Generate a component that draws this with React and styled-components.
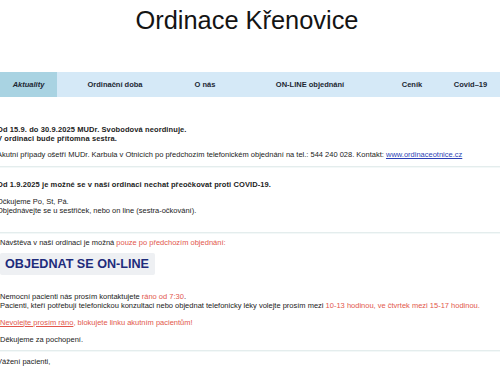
import React from 'react';
import styled, { createGlobalStyle } from 'styled-components';

const GlobalStyle = createGlobalStyle`
  html, body {
    margin: 0;
    padding: 0;
    background: #ffffff;
    font-family: "Liberation Sans", Arial, sans-serif;
    overflow: hidden;
  }
`;

const Page = styled.div`
  width: 500px;
  height: 375px;
  overflow: hidden;
`;

const Header = styled.header`
  height: 72px;
  display: flex;
  justify-content: center;
  padding: 5px 6px 0 0;
  box-sizing: border-box;
`;

const Title = styled.h1`
  margin: 0;
  font-size: 25.4px;
  line-height: 30px;
  font-weight: normal;
  color: #141414;
`;

const Nav = styled.nav`
  display: flex;
  height: 25px;
  background: #d5e9f7;
`;

const NavItem = styled.div`
  width: ${({ w }) => w}px;
  display: flex;
  align-items: center;
  justify-content: center;
  font-size: 7.5px;
  font-weight: bold;
  font-style: ${({ active }) => (active ? 'italic' : 'normal')};
  color: #1c2733;
  background: ${({ active }) => (active ? '#a9d3e2' : 'transparent')};
`;

const Content = styled.main`
  margin-left: -3px;
`;

const Section = styled.section`
  display: flex;
  flex-direction: column;
  align-items: flex-start;
  gap: ${({ gap }) => gap || 8}px;
  padding: ${({ pt }) => pt}px 0 ${({ pb }) => pb}px ${({ inset }) => inset || 0}px;
  border-bottom: ${({ last }) => (last ? 'none' : '1px solid #e4eded')};
  box-shadow: ${({ last }) => (last ? 'none' : '0 1px 0 #f3f8f8')};
`;

const Text = styled.p`
  margin: 0;
  font-size: 7.5px;
  line-height: 9px;
  color: #222;
  font-weight: ${({ bold }) => (bold ? 'bold' : 'normal')};
  letter-spacing: ${({ bold }) => (bold ? '0.1px' : '0')};
  white-space: nowrap;
`;

const Red = styled.span`
  color: #e2574c;
  text-decoration: ${({ underline }) => (underline ? 'underline' : 'none')};
`;

const Link = styled.a`
  color: #2c3fb5;
  text-decoration: underline;
`;

const OrderButton = styled.a`
  display: block;
  margin: -1.5px 0 8.5px 0;
  height: 22px;
  width: 155px;
  box-sizing: border-box;
  padding-left: 5px;
  background: #eef0f3;
  border-radius: 2px;
  font-size: 12.6px;
  line-height: 22px;
  font-weight: bold;
  color: #1e2c7c;
  text-decoration: none;
  white-space: nowrap;
`;

const navItems = [
  { label: 'Aktuality', w: 57, active: true },
  { label: 'Ordinační doba', w: 116 },
  { label: 'O nás', w: 64 },
  { label: 'ON-LINE objednání', w: 146 },
  { label: 'Ceník', w: 58 },
  { label: 'Covid–19', w: 59 },
];

const App = () => {
  return (
    <Page>
      <GlobalStyle />
      <Header>
        <Title>Ordinace Křenovice</Title>
      </Header>
      <Nav>
        {navItems.map((item) => (
          <NavItem key={item.label} w={item.w} active={item.active}>
            {item.label}
          </NavItem>
        ))}
      </Nav>
      <Content>
        <Section pt={27.5} pb={7} gap={7.5}>
          <Text bold>
            Od 15.9. do 30.9.2025 MUDr. Svobodová neordinuje.
            <br />
            V ordinaci bude přítomna sestra.
          </Text>
          <Text>
            Akutní případy ošetří MUDr. Karbula v Otnicích po předchozím telefonickém objednání na tel.: 544 240 028. Kontakt:{' '}
            <Link href="#">www.ordinaceotnice.cz</Link>
          </Text>
        </Section>
        <Section pt={12.5} pb={17.5}>
          <Text bold>Od 1.9.2025 je možné se v naší ordinaci nechat přeočkovat proti COVID-19.</Text>
          <Text>
            Očkujeme Po, St, Pá.
            <br />
            Objednávejte se u sestřiček, nebo on line (sestra-očkování).
          </Text>
        </Section>
        <Section pt={4.5} pb={6.5} inset={3} gap={8}>
          <Text>
            Návštěva v naší ordinaci je možná <Red>pouze po předchozím objednání:</Red>
          </Text>
          <OrderButton href="#">OBJEDNAT SE ON-LINE</OrderButton>
          <Text>
            Nemocní pacienti nás prosím kontaktujete <Red>ráno od 7:30</Red>.
            <br />
            Pacienti, kteří potřebují telefonickou konzultaci nebo objednat telefonicky léky volejte prosím mezi{' '}
            <Red>10-13 hodinou, ve čtvrtek mezi 15-17 hodinou.</Red>
          </Text>
          <Text>
            <Red underline>Nevolejte prosím ráno</Red>
            <Red>, blokujete linku akutním pacientům!</Red>
          </Text>
          <Text>Děkujeme za pochopení.</Text>
        </Section>
        <Section pt={5.5} pb={6} last>
          <Text>Vážení pacienti,</Text>
        </Section>
      </Content>
    </Page>
  );
};

export default App;
